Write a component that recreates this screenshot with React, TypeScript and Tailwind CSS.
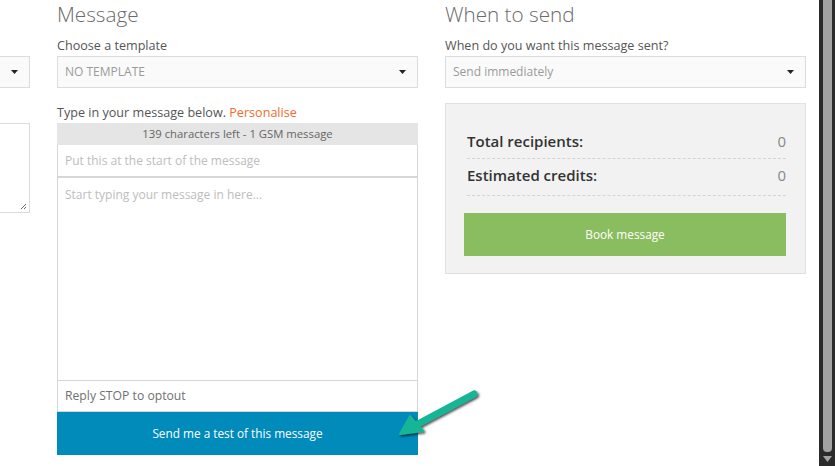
import React from "react";

const Caret = () => (
  <svg width="7" height="4" viewBox="0 0 7 4" className="shrink-0">
    <path d="M0 0 L7 0 L3.5 4 Z" fill="#222" />
  </svg>
);

const Select = ({ text }: { text: string }) => (
  <div className="flex h-[32px] items-center justify-between border border-[#dcdcdc] bg-[#fafafa] pl-[7px] pr-[11px]">
    <span className="text-[12px] text-[#9a9a9a]">{text}</span>
    <Caret />
  </div>
);

export default function App() {
  return (
    <div
      className="relative flex h-[466px] w-[835px] overflow-hidden bg-white"
      style={{ fontFamily: '"Open Sans", "Noto Sans", sans-serif' }}
    >
      <div className="flex flex-1 gap-[27px] ml-[-331px]">
        {/* Left (cut off) column */}
        <div className="w-[361px] shrink-0 pt-[56px]">
          <Select text="" />
          <div className="mt-[35px] relative h-[90px] border border-[#dcdcdc] bg-white">
            <svg width="7" height="7" viewBox="0 0 7 7" className="absolute right-[2px] bottom-[2px]">
              <path d="M6 1 L1 6 M6 4 L4 6" stroke="#666" strokeWidth="1" />
            </svg>
          </div>
        </div>

        {/* Message column */}
        <div className="w-[361px] shrink-0">
          <h2 className="h-[28px] text-[20.7px] font-light leading-[28px] text-[#6b6b6b]">Message</h2>
          <div className="mt-[8px] h-[20px] text-[12.6px] leading-[20px] text-[#555]">Choose a template</div>
          <Select text="NO TEMPLATE" />
          <div className="mt-[14px] h-[21px] text-[12.6px] leading-[21px] text-[#555]">
            Type in your message below. <span className="text-[#f26b2a]">Personalise</span>
          </div>
          <div className="flex h-[22px] items-center justify-center bg-[#e5e5e5] text-[11.3px] text-[#666]">
            139 characters left - 1 GSM message
          </div>
          <div className="flex h-[33px] items-center border border-b-2 border-[#d6d6d6] border-t-0 bg-white pl-[7px] text-[12px] text-[#bdbdbd]">
            Put this at the start of the message
          </div>
          <div className="h-[202px] border-x border-[#d6d6d6] bg-white pl-[7px] pt-[8px] text-[12px] text-[#bdbdbd]">
            Start typing your message in here...
          </div>
          <div className="flex h-[32px] items-center border border-[#d6d6d6] bg-white pl-[7px] text-[12.2px] text-[#707070]">
            Reply STOP to optout
          </div>
          <div className="flex h-[43px] items-center justify-center bg-[#008bbb] text-[11.8px] text-white">
            Send me a test of this message
          </div>
        </div>

        {/* When to send column */}
        <div className="w-[361px] shrink-0">
          <h2 className="h-[28px] text-[20.7px] font-light leading-[28px] text-[#6b6b6b]">When to send</h2>
          <div className="mt-[8px] h-[20px] text-[12.6px] leading-[20px] text-[#555]">When do you want this message sent?</div>
          <Select text="Send immediately" />
          <div className="mt-[15px] h-[171px] border border-[#e0e0e0] bg-[#f2f2f2] pl-[21px] pr-[19px] pt-[20px]">
            <div className="flex h-[35px] items-center justify-between border-b border-dashed border-[#d4d4d4] text-[15px]">
              <span className="font-semibold text-[#333]">Total recipients:</span>
              <span className="text-[#888]">0</span>
            </div>
            <div className="flex h-[37px] items-center justify-between border-b border-dashed border-[#d4d4d4] pb-[3px] text-[15px]">
              <span className="font-semibold text-[#333]">Estimated credits:</span>
              <span className="text-[#888]">0</span>
            </div>
            <div className="ml-[-3px] mt-[17px] flex h-[43px] items-center justify-center bg-[#8abd5f] text-[11.8px] text-white">
              Book message
            </div>
          </div>
        </div>
      </div>

      {/* Scrollbar */}
      <div className="flex h-full w-[16px] shrink-0 flex-col items-center bg-[#2b2b2b]">
        <div className="h-[452px] w-[9px] rounded-b-[4px] bg-[#a3a3a3] ml-[1px]" />
        <svg width="9" height="6" viewBox="0 0 9 6" className="mt-[4px] ml-[1px]">
          <path d="M0 0 L9 0 L4.5 6 Z" fill="#a3a3a3" />
        </svg>
      </div>

      {/* Annotation arrow */}
      <svg
        className="pointer-events-none absolute left-[390px] top-[382px]"
        width="100"
        height="60"
        viewBox="0 0 100 60"
      >
        <defs>
          <filter id="sh" x="-20%" y="-20%" width="140%" height="140%">
            <feDropShadow dx="1.5" dy="1.5" stdDeviation="1.2" floodColor="#000" floodOpacity="0.7" />
          </filter>
        </defs>
        <g filter="url(#sh)">
          <line x1="84" y1="12" x2="24" y2="44" stroke="#14b596" strokeWidth="7" strokeLinecap="round" />
          <path d="M10 52 L20 34 L33 49 Z" fill="#14b596" stroke="#14b596" strokeWidth="2" strokeLinejoin="round" />
        </g>
      </svg>
    </div>
  );
}
